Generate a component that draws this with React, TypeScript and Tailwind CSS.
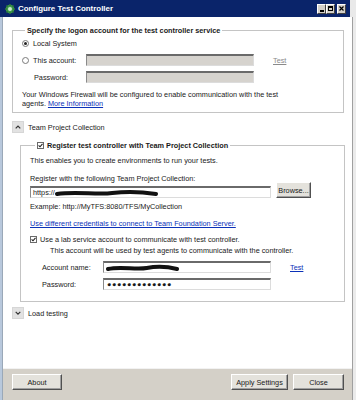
import React from "react";

const field =
  "h-[12px] border border-t-2 border-t-[#6a6a6a] border-l-[#8a8a8a] border-r-[#dcdcdc] border-b-[#dcdcdc]";

const Radio = ({ checked }: { checked?: boolean }) => (
  <span className="flex items-center justify-center w-[7px] h-[7px] rounded-full border border-[#7a7a7a] bg-white shrink-0">
    {checked && <span className="w-[3px] h-[3px] rounded-full bg-[#222]" />}
  </span>
);

const Check = () => (
  <span className="flex items-center justify-center w-[7px] h-[7px] border border-[#6a6a6a] bg-white shrink-0">
    <svg width="5" height="5" viewBox="0 0 5 5">
      <path d="M0.6 2.4 L2 3.8 L4.5 0.8" stroke="#222" strokeWidth="1.1" fill="none" />
    </svg>
  </span>
);

const Expander = ({ up, label }: { up?: boolean; label: string }) => (
  <div className="flex items-center gap-[4px] ml-[9px] h-[12px]">
    <span className="flex items-center justify-center w-[12px] h-[12px] bg-[#e2e2e2] border border-[#d6d6d6]">
      <svg width="6" height="4" viewBox="0 0 6 4">
        <path d={up ? "M0.7 3.3 L3 1 L5.3 3.3" : "M0.7 0.8 L3 3.1 L5.3 0.8"} stroke="#333" strokeWidth="1.2" fill="none" />
      </svg>
    </span>
    <span>{label}</span>
  </div>
);

const Button = ({ w, children }: { w: string; children: React.ReactNode }) => (
  <div
    className={`${w} h-[16px] flex items-center justify-center bg-[#e4e2dc] border border-t-white border-l-white border-r-[#505050] border-b-[#505050] shadow-[inset_-1px_-1px_0_#a0a0a0]`}
  >
    {children}
  </div>
);

const Scribble = ({ w }: { w: number }) => (
  <svg width={w} height="8" viewBox={`0 0 ${w} 8`}>
    <path
      d={`M2 5 C ${w * 0.2} 2, ${w * 0.4} 6, ${w * 0.55} 4 S ${w * 0.85} 3, ${w - 3} 5`}
      stroke="#111"
      strokeWidth="4"
      strokeLinecap="round"
      fill="none"
    />
  </svg>
);

export default function App() {
  return (
    <div className="w-[356px] h-[400px] flex flex-col bg-[#d4d0c8] font-['Liberation_Sans',Arial,sans-serif] text-[7.3px] leading-[9px] text-[#1a1a1a] overflow-hidden">
      {/* title bar */}
      <div className="flex h-[17px] shrink-0">
        <div className="w-[350px] flex items-center bg-[#0a246a] pl-[5px] pr-[4px]">
          <svg width="10" height="10" viewBox="0 0 10 10">
            <circle cx="5" cy="5" r="4.3" fill="#3c9a4a" />
            <circle cx="5" cy="5" r="2" fill="#cfe8cf" />
            <path d="M5 0 V2 M5 8 V10 M0 5 H2 M8 5 H10 M1.5 1.5 L3 3 M7 7 L8.5 8.5 M8.5 1.5 L7 3 M3 7 L1.5 8.5" stroke="#2f7d3a" strokeWidth="1.4" />
          </svg>
          <span className="ml-[3px] text-white font-bold text-[7.9px]">Configure Test Controller</span>
          <div className="ml-auto flex items-center">
            <div className="w-[9px] h-[10px] bg-[#d4d0c8] border border-t-white border-l-white border-r-[#404040] border-b-[#404040] flex items-end justify-center pb-[1px]">
              <span className="w-[4px] h-[1.5px] bg-black" />
            </div>
            <div className="w-[9px] h-[10px] bg-[#d4d0c8] border border-t-white border-l-white border-r-[#404040] border-b-[#404040] flex items-center justify-center">
              <span className="w-[5px] h-[5px] border border-black border-t-2" />
            </div>
            <div className="ml-[2px] w-[9px] h-[10px] bg-[#d4d0c8] border border-t-white border-l-white border-r-[#404040] border-b-[#404040] flex items-center justify-center">
              <svg width="5" height="5" viewBox="0 0 5 5">
                <path d="M0.5 0.5 L4.5 4.5 M4.5 0.5 L0.5 4.5" stroke="#000" strokeWidth="1.2" />
              </svg>
            </div>
          </div>
        </div>
        <div className="w-[6px] bg-[#e9e9e9]" />
      </div>

      <div className="flex flex-1">
        <div className="w-[3px] bg-[#b8c8dc] border-r border-[#9aa8b8]" />

        <div className="w-[349px] flex flex-col">
          <div className="flex-1 flex flex-col bg-white">
            {/* logon account group */}
            <fieldset className="mt-[9px] ml-[9px] w-[332px] border border-[#c4c4c4] pl-[9px] pb-[4px]">
              <legend className="ml-[3px] px-[2px] font-bold leading-[9px]">
                Specify the logon account for the test controller service
              </legend>
              <div className="pt-[3px] flex items-center h-[13px] gap-[4px]">
                <Radio checked />
                <span>Local System</span>
              </div>
              <div className="mt-[6px] flex items-center h-[12px]">
                <div className="w-[64px] flex items-center gap-[4px]">
                  <Radio />
                  <span>This account:</span>
                </div>
                <div className={`w-[168px] bg-[#d6d3ce] ${field}`} />
                <span className="ml-[19px] text-[#8a8a8a] underline">Test</span>
              </div>
              <div className="mt-[5px] flex items-center h-[12px]">
                <span className="w-[64px] pl-[12px]">Password:</span>
                <div className={`w-[168px] bg-[#d6d3ce] ${field}`} />
              </div>
              <div className="mt-[7px] leading-[9px]">
                <p>Your Windows Firewall will be configured to enable communication with the test</p>
                <p className="flex gap-[2px]">
                  <span>agents.</span>
                  <span className="text-[#0b31b8] underline">More Information</span>
                </p>
              </div>
            </fieldset>

            <div className="mt-[8px]">
              <Expander up label="Team Project Collection" />
            </div>

            {/* team project collection group */}
            <fieldset className="mt-[8px] ml-[17px] w-[325px] border border-[#c4c4c4] pl-[9px] pb-[11px]">
              <legend className="ml-[5px] px-[2px] font-bold leading-[9px]">
                <span className="inline-flex items-center gap-[3px]">
                  <Check />
                  Register test controller with Team Project Collection
                </span>
              </legend>
              <p className="pt-[7px] leading-[8px]">This enables you to create environments to run your tests.</p>
              <p className="mt-[10px] leading-[8px]">Register with the following Team Project Collection:</p>
              <div className="flex items-end h-[15px]">
                <div className={`w-[241px] bg-white flex items-center pl-[2px] ${field}`}>
                  <span>https://</span>
                  <Scribble w={104} />
                </div>
                <div className="ml-[5px]">
                  <Button w="w-[35px]">Browse...</Button>
                </div>
              </div>
              <p className="mt-[5px] leading-[8px]">Example: http://MyTFS:8080/TFS/MyCollection</p>
              <p className="mt-[9px] leading-[8px] text-[#0b31b8] underline">
                Use different credentials to connect to Team Foundation Server.
              </p>
              <div className="mt-[7px] flex items-center gap-[3px] h-[8px]">
                <Check />
                <span>Use a lab service account to communicate with test controller.</span>
              </div>
              <p className="mt-[4px] pl-[20px] leading-[8px]">
                This account will be used by test agents to communicate with the controller.
              </p>
              <div className="mt-[6px] flex items-center h-[12px]">
                <span className="w-[73px] pl-[12px]">Account name:</span>
                <div className={`w-[168px] bg-white flex items-center pl-[2px] ${field}`}>
                  <Scribble w={74} />
                </div>
                <span className="ml-[19px] text-[#0b31b8] underline">Test</span>
              </div>
              <div className="mt-[5px] flex items-center h-[12px]">
                <span className="w-[73px] pl-[12px]">Password:</span>
                <div className={`w-[168px] bg-white flex items-center pl-[3px] tracking-[0.6px] ${field}`}>
                  ●●●●●●●●●●●●●
                </div>
              </div>
            </fieldset>

            <div className="mt-[5px]">
              <Expander label="Load testing" />
            </div>
          </div>

          {/* footer */}
          <div className="h-[32px] shrink-0 border-t border-[#f2f2f2] flex items-start pt-[5px] pl-[9px] pr-[8px]">
            <Button w="w-[50px]">About</Button>
            <div className="ml-auto flex gap-[5px]">
              <Button w="w-[57px]">Apply Settings</Button>
              <Button w="w-[51px]">Close</Button>
            </div>
          </div>
        </div>

        <div className="w-[4px] bg-[#ebebeb] border-l border-[#a0a0a0]" />
      </div>
    </div>
  );
}
